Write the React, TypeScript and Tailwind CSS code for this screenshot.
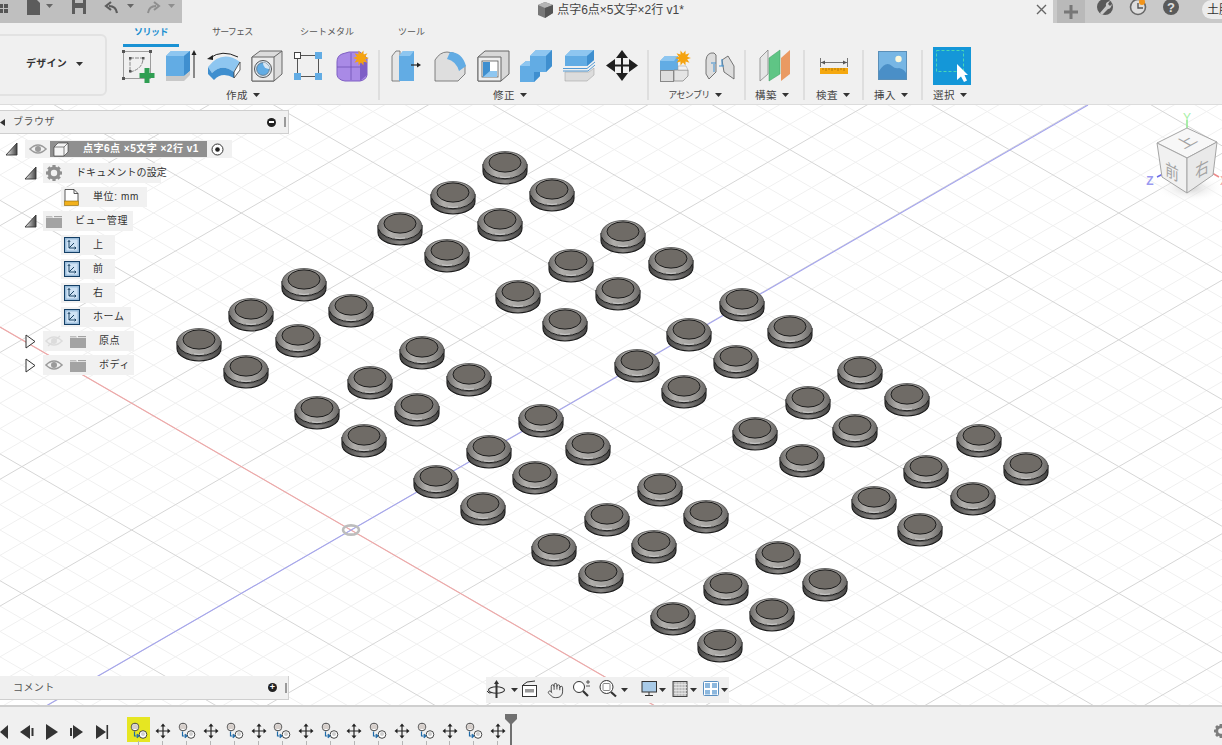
import React from "react";
import { Hand } from "lucide-react";

const S = ({ x, y, w, h, children, className = "" }: { x: number; y: number; w: number; h: number; children?: React.ReactNode; className?: string }) => (
  <svg width={w} height={h} viewBox={`${x} ${y} ${w} ${h}`} className={`block shrink-0 ${className}`}>
    {children}
  </svg>
);

const Caret = ({ className = "" }: { className?: string }) => (
  <svg width="7" height="4" viewBox="0 0 7 4" className={`inline-block shrink-0 ${className}`}>
    <polygon points="0,0 7,0 3.5,4" fill="#333" />
  </svg>
);

const dots: [number, number][] = [
  [505, 166], [453, 196], [552, 193], [400, 227], [500, 223], [447, 254],
  [623, 235], [571, 264], [671, 262], [518, 295], [618, 292], [565, 323],
  [742, 303], [689, 333], [790, 330], [637, 364], [736, 360], [684, 390],
  [860, 371], [808, 401], [907, 398], [755, 432], [855, 429], [802, 459],
  [979, 439], [926, 470], [1026, 467], [874, 501], [973, 497], [920, 528],
  [304, 283], [251, 313], [351, 309], [199, 343], [298, 339], [246, 370],
  [422, 351], [370, 381], [469, 378], [317, 411], [417, 408], [364, 439],
  [541, 419], [489, 450], [588, 447], [436, 480], [535, 476], [483, 507],
  [660, 488], [607, 518], [706, 515], [554, 548], [654, 545], [601, 575],
  [778, 556], [726, 587], [825, 583], [673, 617], [772, 613], [720, 644],
];

const Dot = ({ x, y }: { x: number; y: number }) => (
  <g transform={`translate(${x} ${y + 1.5})`}>
    <path d="M-22 -3 L-22 4 A22 12.5 0 0 0 22 4 L22 -3 Z" fill="url(#base)" stroke="#1b1b1b" strokeWidth="1.1" />
    <ellipse cx="0" cy="-2" rx="22" ry="14" fill="url(#dome)" stroke="#3a3a3a" strokeWidth="0.7" />
    <path d="M-21.5 0.5 A22 13.6 0 0 0 21.5 0.5" fill="none" stroke="#1f1f1f" strokeWidth="1" />
    <path d="M-5 9.4 Q0 10.4 5 9.4" fill="none" stroke="#cfcfcf" strokeWidth="0.9" />
    <ellipse cx="0" cy="-5" rx="16" ry="9.6" fill="#6f6b66" stroke="#1c1c1c" strokeWidth="1" />
  </g>
);

function gridLines() {
  const s = 0.578;
  const d = 25.36;
  const minor: string[] = [];
  const major: string[] = [];
  for (let k = -70; k <= 70; k++) {
    const a = `M0 ${530 + s * 351 + k * d} L1222 ${530 - s * 871 + k * d}`;
    const b = `M0 ${530 - s * 351 + k * d} L1222 ${530 + s * 871 + k * d}`;
    if (k % 5 === 0) major.push(a, b);
    else minor.push(a, b);
  }
  return { minor: minor.join(" "), major: major.join(" ") };
}
const grid = gridLines();

const Canvas = () => (
  <svg width="1222" height="601" viewBox="0 105 1222 601" className="absolute inset-0 block">
    <defs>
      <linearGradient id="dome" x1="0" x2="1" y1="0" y2="0">
        <stop offset="0" stopColor="#6e6c6a" />
        <stop offset="0.28" stopColor="#b0aeab" />
        <stop offset="0.72" stopColor="#9c9a97" />
        <stop offset="1" stopColor="#6a6866" />
      </linearGradient>
      <linearGradient id="base" x1="0" x2="1" y1="0" y2="0">
        <stop offset="0" stopColor="#444342" />
        <stop offset="0.5" stopColor="#8a8886" />
        <stop offset="1" stopColor="#444342" />
      </linearGradient>
      <radialGradient id="cubeShadow">
        <stop offset="0" stopColor="#cfcfcf" />
        <stop offset="1" stopColor="#ffffff" stopOpacity="0" />
      </radialGradient>
    </defs>
    <rect x="0" y="105" width="1222" height="601" fill="#ffffff" />
    <path d={grid.minor} stroke="#f0f0f0" strokeWidth="1" fill="none" />
    <path d={grid.major} stroke="#d6d6d6" strokeWidth="1" fill="none" />
    <line x1="0" y1="327" x2="655" y2="706" stroke="#f0a6a6" strokeWidth="1.1" />
    <line x1="46" y1="706" x2="1088" y2="105" stroke="#a3a3ee" strokeWidth="1.1" />
    <ellipse cx="351" cy="530" rx="8" ry="4.6" fill="none" stroke="#bdbdbd" strokeWidth="2.6" />
    {dots.map(([x, y]) => (
      <Dot key={`${x}-${y}`} x={x} y={y} />
    ))}
    <ellipse cx="1190" cy="188" rx="34" ry="14" fill="url(#cubeShadow)" />
    <line x1="1187" y1="128" x2="1187" y2="120" stroke="#8fe88f" strokeWidth="1.5" />
    <text x="1187" y="122" textAnchor="middle" fontSize="12" fill="#a6f0a6" fontFamily="Liberation Sans, sans-serif">Y</text>
    <line x1="1157" y1="177" x2="1163" y2="174" stroke="#6a6ae8" strokeWidth="1.5" />
    <text x="1150" y="185" textAnchor="middle" fontSize="12" fontWeight="700" fill="#9a9af0" fontFamily="Liberation Sans, sans-serif">Z</text>
    <line x1="1212" y1="173" x2="1219" y2="177" stroke="#ee8a8a" strokeWidth="1.5" />
    <text x="1220" y="185" fontSize="12" fill="#f0a0a0" fontFamily="Liberation Sans, sans-serif">X</text>
    <polygon points="1187,128 1217,142 1187,158 1157,143" fill="#f7f7f7" stroke="#a5a5a5" />
    <polygon points="1157,143 1187,158 1187,193 1162,177" fill="#f1f1f1" stroke="#a5a5a5" />
    <polygon points="1217,142 1187,158 1187,193 1213,175" fill="#e9e9e9" stroke="#a5a5a5" />
    <g fontFamily="Noto Sans CJK JP, sans-serif" fill="#a2a2a2" fontSize="17">
      <text transform="matrix(0.86 -0.48 0.86 0.48 1187 143)" textAnchor="middle" dominantBaseline="middle">上</text>
      <text transform="matrix(0.8 0.42 0 1 1172 178)" textAnchor="middle">前</text>
      <text transform="matrix(0.8 -0.42 0 1 1202 175)" textAnchor="middle">右</text>
    </g>
  </svg>
);

const Label = ({ text, className = "", kana = false }: { text: string; className?: string; kana?: boolean }) => (
  <div className={`flex h-[20px] items-center justify-center gap-[5px] leading-none text-[#444] ${kana ? "text-[9px] tracking-[-0.6px]" : "text-[10.5px] tracking-[0.5px]"} ${className}`}>
    <span>{text}</span>
    <Caret />
  </div>
);

const Sep = () => <div className="mt-[3px] h-[50px] w-[2px] shrink-0 bg-[#dedede]" />;

const blueL = "#8ec6f0";
const blueM = "#62ace4";
const blueD = "#3f8fcf";

const Star = ({ cx, cy, r = 8 }: { cx: number; cy: number; r?: number }) => {
  const pts: string[] = [];
  for (let i = 0; i < 20; i++) {
    const a = (Math.PI * 2 * i) / 20;
    const rr = i % 2 === 0 ? r : r * 0.55;
    pts.push(`${cx + Math.cos(a) * rr},${cy + Math.sin(a) * rr}`);
  }
  return <polygon points={pts.join(" ")} fill="#f5a30f" />;
};

const SolidIcons = () => (
  <div className="flex">
    <S x={120} y={47} w={40} h={38}>
      <rect x="123.5" y="51.5" width="27" height="27" fill="none" stroke="#888" strokeWidth="0.8" />
      {[[123.5, 51.5], [150.5, 51.5], [123.5, 78.5]].map(([a, b]) => (
        <rect key={a + "-" + b} x={a - 1.5} y={b - 1.5} width="3" height="3" fill="#555" />
      ))}
      <path d="M130 58 H143 Q143 69 130 72 Z" fill="none" stroke="#888" strokeWidth="1" strokeDasharray="4 1" />
      <rect x="129" y="57" width="2.5" height="2.5" fill="#555" />
      <rect x="142" y="57" width="2.5" height="2.5" fill="#555" />
      <rect x="129" y="70" width="2.5" height="2.5" fill="#555" />
      <path d="M144.5 68 h5 v5 h5 v5 h-5 v5 h-5 v-5 h-5 v-5 h5 z" fill="#2f9e52" />
    </S>
    <S x={160} y={47} w={42} h={38}>
      <polygon points="166,76 166,56 171,51 190,51 190,71 184,76" fill={blueM} />
      <polygon points="166,56 171,51 190,51 184,56" fill={blueL} />
      <polygon points="184,56 190,51 190,71 184,76" fill={blueD} />
      <polygon points="166,76 184,76 190,71 190,75 184,81 166,81" fill="#c8c8c8" />
      <line x1="194" y1="78" x2="194" y2="54" stroke="#222" strokeWidth="1" />
      <polygon points="194,50 191.5,55 196.5,55" fill="#222" />
    </S>
    <S x={202} y={47} w={44} h={38}>
      <path d="M210 58 Q222 49 238 57" fill="none" stroke="#222" strokeWidth="1" />
      <polygon points="207,59 213,55 213,60" fill="#222" />
      <path d="M208 67 Q222 49 240 62 L234 72 Q222 63 212 73 Z" fill={blueL} />
      <path d="M208 67 L212 73 Q222 63 234 72 L234 78 Q222 71 214 80 L208 74 Z" fill={blueD} />
      <polygon points="234,72 240,62 240,70 234,78" fill="#fff" stroke="#333" strokeWidth="0.8" />
    </S>
    <S x={246} y={47} w={43} h={38}>
      <polygon points="252,57 260,51 282,51 282,74 274,81 252,81" fill="#dcdcdc" stroke="#666" strokeWidth="1" />
      <polygon points="252,57 274,57 274,81 252,81" fill="#ececec" stroke="#666" strokeWidth="1" />
      <line x1="274" y1="57" x2="282" y2="51" stroke="#666" />
      <circle cx="263" cy="69" r="8.5" fill="#d8e6f2" stroke="#555" />
      <circle cx="263" cy="69" r="6.4" fill={blueM} stroke="#555" strokeWidth="0.6" />
      <path d="M263 62.6 A6.4 6.4 0 0 1 269.4 69 A6 6 0 0 1 263 62.6 Z" fill="#d8e6f2" />
    </S>
    <S x={289} y={47} w={41} h={38}>
      <line x1="300" y1="55.5" x2="315" y2="55.5" stroke="#555" />
      <line x1="297.5" y1="58" x2="297.5" y2="73" stroke="#555" />
      <line x1="300" y1="76.5" x2="315" y2="76.5" stroke="#555" />
      <line x1="318.5" y1="58" x2="318.5" y2="73" stroke="#555" />
      <rect x="294.5" y="52.5" width="6" height="6" fill="#fff" stroke="#444" />
      <rect x="315" y="52" width="7" height="7" fill={blueM} />
      <rect x="294" y="73" width="7" height="7" fill={blueM} />
      <rect x="315" y="73" width="7" height="7" fill={blueM} />
    </S>
    <S x={330} y={47} w={46} h={38}>
      <path d="M337 62 Q337 56 342 54 L349 52 L360 52 L367 58 L367 75 Q366 80 360 81 L345 81 Q338 80 337 75 Z" fill="#a98ae6" stroke="#7f5fc4" />
      <path d="M337 67 H362 M351 53 V80" stroke="#6f52b2" strokeWidth="0.8" />
      <path d="M360 62 H367 V75 L360 81 Z" fill="#7e5ec6" />
      <Star cx={361} cy={58} r={8} />
    </S>
  </div>
);

const ModifyIcons = () => (
  <div className="flex">
    <S x={381} y={47} w={45} h={38}>
      <polygon points="392,81 392,56 396,51 400,51 400,81" fill="#e6e6e6" stroke="#666" strokeWidth="0.8" />
      <polygon points="399,81 399,56 403,51 414,51 414,81" fill={blueM} />
      <polygon points="399,56 403,51 414,51 410,56" fill={blueL} />
      <line x1="411" y1="65" x2="418" y2="65" stroke="#222" strokeWidth="1.2" />
      <polygon points="421,65 417,62.5 417,67.5" fill="#222" />
    </S>
    <S x={426} y={47} w={44} h={38}>
      <path d="M435 81 V60 Q440 52 447 52 Q460 52 465 66 V74 L458 81 Z" fill="#dedede" stroke="#666" strokeWidth="0.8" />
      <path d="M450 52 Q462 52 466 66 L459 71 Q456 61 447 59 Z" fill={blueM} />
    </S>
    <S x={470} y={47} w={43} h={38}>
      <polygon points="478,57 485,51 509,51 509,74 501,81 478,81" fill="#d8d8d8" stroke="#666" />
      <polygon points="478,57 501,57 501,81 478,81" fill="#efefef" stroke="#666" />
      <rect x="482" y="61" width="16" height="16" fill="#fff" stroke="#555" strokeWidth="0.8" />
      <polygon points="483,62 490,62 490,71 497,71 497,77 483,77" fill={blueL} />
      <polygon points="483,62 490,62 490,71 483,77" fill={blueD} />
    </S>
    <S x={513} y={47} w={44} h={38}>
      <polygon points="520,66 526,61 540,61 540,76 534,82 520,82" fill={blueM} />
      <polygon points="530,56 536,50 552,50 552,66 546,72 530,72" fill={blueM} />
      <polygon points="530,56 536,50 552,50 546,56" fill={blueL} />
      <polygon points="546,56 552,50 552,66 546,72" fill={blueD} />
      <polygon points="520,66 526,61 530,61 530,66" fill={blueL} />
      <polygon points="534,72 540,72 540,76 534,82" fill={blueD} />
    </S>
    <S x={557} y={47} w={44} h={38}>
      <polygon points="565,56 571,50 594,50 594,60 587,66 565,66" fill={blueM} />
      <polygon points="565,56 571,50 594,50 587,56" fill={blueL} />
      <polygon points="587,56 594,50 594,60 587,66" fill={blueD} />
      <polygon points="565,72 589,72 594,68 594,75 587,81 565,81" fill="#dcdcdc" stroke="#999" strokeWidth="0.5" />
      <path d="M563 68.5 H587 L595 62 M563 71 H588 L595 65" stroke={blueD} strokeWidth="0.9" fill="none" />
    </S>
    <S x={601} y={47} w={46} h={38}>
      <path d="M622 50 L628 58 H623 V64.5 H629 V59 L638 65.5 L629 72 V66.5 H623 V73 H628 L622 81 L616 73 H621 V66.5 H615 V72 L606 65.5 L615 59 V64.5 H621 V58 H616 Z" fill="#1f1f1f" />
    </S>
  </div>
);

const AssemblyIcons = () => (
  <div className="flex">
    <S x={650} y={47} w={53} h={38}>
      <polygon points="660,61 665,56 678,56 678,70 660,70" fill={blueM} />
      <polygon points="660,61 665,56 678,56 674,61" fill={blueL} />
      <rect x="660.5" y="70.5" width="13" height="11" fill="#dedede" stroke="#888" />
      <polygon points="674,70 688,70 688,76 683,81 674,81" fill="#e4e4e4" stroke="#888" strokeWidth="0.8" />
      <polygon points="678,66 686,66 688,70 678,70" fill="#f2f2f2" stroke="#999" strokeWidth="0.5" />
      <Star cx={683} cy={58} r={8} />
    </S>
    <S x={703} y={47} w={41} h={38}>
      <path d="M706 60 Q707 52 714 53 L716 55 V72 L709 79 L706 74 Z" fill="#ddd" stroke="#666" strokeWidth="0.9" />
      <path d="M722 60 L728 56 L734 66 V79 L724 72 Z" fill="#ddd" stroke="#666" strokeWidth="0.9" />
      <line x1="714" y1="64" x2="714" y2="72" stroke={blueD} />
      <line x1="722" y1="59" x2="722" y2="66" stroke={blueD} />
      <path d="M711 63 h5 M719 66 h5" stroke={blueD} />
    </S>
  </div>
);

const Icons4 = () => (
  <S x={747} y={47} w={56} h={38}>
    <polygon points="760,58 768,50 768,74 760,81" fill="#e6e6e6" stroke="#777" strokeWidth="0.7" />
    <polygon points="769,58 780,50 780,74 769,81" fill="#5fc585" stroke="#3c9c60" strokeWidth="0.5" />
    <polygon points="781,58 790,50 790,74 781,81" fill="#ea9a62" />
  </S>
);
const Icons5 = () => (
  <S x={806} y={47} w={56} h={38}>
    <rect x="820" y="68" width="28" height="6" fill="#f5a80f" />
    <path d="M823 68 v2 M826 68 v3 M829 68 v2 M832 68 v3 M835 68 v2 M838 68 v3 M841 68 v2 M844 68 v3" stroke="#8a5a00" strokeWidth="0.6" />
    <path d="M820.5 58 V67 M847.5 58 V67" stroke="#666" strokeWidth="0.9" />
    <line x1="821" y1="62.5" x2="847" y2="62.5" stroke="#666" strokeWidth="0.9" />
    <polygon points="821,62.5 825,60.5 825,64.5" fill="#555" />
    <polygon points="847,62.5 843,60.5 843,64.5" fill="#555" />
  </S>
);
const Icons6 = () => (
  <S x={865} y={47} w={56} h={38}>
    <rect x="878.5" y="51.5" width="28" height="28" fill="#77b6e4" stroke="#5a8fb8" />
    <circle cx="898.5" cy="59" r="3.2" fill="#fbf8dc" />
    <path d="M879 79 V71 Q886 60 892 66 Q895 69 899 68 Q904 69 906 73 V79 Z" fill="#4a8fc7" />
  </S>
);
const Icons7 = () => (
  <S x={924} y={47} w={56} h={38}>
    <rect x="933" y="47" width="38" height="38" fill="#1497d8" />
    <rect x="936.5" y="50.5" width="27" height="21" fill="none" stroke="#4fe0b0" strokeWidth="0.9" strokeDasharray="3 2" />
    <path d="M957 64 L957 80 L961 76.5 L964 82 L967 80.5 L964.5 75 L968 75 Z" fill="#fff" />
  </S>
);

const Expanded = () => (
  <svg width="13" height="14" viewBox="0 0 13 14" className="block shrink-0">
    <defs>
      <linearGradient id="tri" x1="0" x2="1" y1="0" y2="0">
        <stop offset="0" stopColor="#eee" />
        <stop offset="1" stopColor="#444" />
      </linearGradient>
    </defs>
    <polygon points="1,13 12,13 12,1" fill="url(#tri)" stroke="#333" strokeWidth="0.9" />
  </svg>
);
const Collapsed = () => (
  <svg width="11" height="15" viewBox="0 0 11 15" className="block shrink-0">
    <polygon points="1,1 1,14 10,7.5" fill="#fafafa" stroke="#333" strokeWidth="1" />
  </svg>
);
const Eye = ({ off = false }: { off?: boolean }) => (
  <svg width="18" height="12" viewBox="0 0 18 12" className="block shrink-0">
    <path d="M1 6 Q9 -2 17 6 Q9 14 1 6 Z" fill="none" stroke={off ? "#dcdcdc" : "#9a9a9a"} strokeWidth="1.6" />
    <circle cx="9" cy="6" r="3" fill={off ? "#dcdcdc" : "#9a9a9a"} />
    {off && <line x1="3" y1="11" x2="15" y2="1" stroke="#dcdcdc" strokeWidth="1.4" />}
  </svg>
);
const Folder = () => (
  <svg width="16" height="13" viewBox="0 0 16 13" className="block shrink-0">
    <path d="M0 1 H6 L7 2.5 H0 Z" fill="#bdbdbd" />
    <rect x="0" y="3" width="16" height="10" fill="#a3a3a3" />
    <rect x="8" y="1" width="8" height="1.2" fill="#a3a3a3" />
  </svg>
);
const Gear = ({ size = 16, color = "#8f8f8f" }: { size?: number; color?: string }) => (
  <svg width={size} height={size} viewBox="0 0 16 16" className="block shrink-0">
    <circle cx="8" cy="8" r="5" fill="none" stroke={color} strokeWidth="3" />
    {[0, 45, 90, 135].map((a) => (
      <rect key={a} x="6.4" y="0" width="3.2" height="16" fill={color} transform={`rotate(${a} 8 8)`} />
    ))}
    <circle cx="8" cy="8" r="3.2" fill="#f2f2f2" />
  </svg>
);
const ViewIcon = () => (
  <svg width="16" height="16" viewBox="0 0 16 16" className="block shrink-0">
    <rect x="0.5" y="0.5" width="15" height="15" fill="#b9d6ef" stroke="#143f66" strokeWidth="1.2" />
    <rect x="2" y="2" width="12" height="12" fill="#cfe3f5" stroke="#7fa9cc" strokeWidth="0.6" />
    <path d="M5 3.5 V11 H12 M5 3.5 L3.8 5 M5 3.5 L6.2 5 M12 11 L10.5 9.8 M12 11 L10.5 12.2 M5 11 L10 6" stroke="#1c4464" strokeWidth="1" fill="none" />
  </svg>
);

const TreeText = ({ children, className = "" }: { children: React.ReactNode; className?: string }) => (
  <span className={`whitespace-nowrap text-[10px] leading-none text-[#333] ${className}`}>{children}</span>
);

const Browser = () => (
  <div className="absolute left-0 top-[5px] w-[289px]">
    <div className="flex h-[24px] items-center border border-l-0 border-[#cfcfcf] bg-[#f0f0f0]">
      <svg width="5" height="7" viewBox="0 0 5 7" className="block"><polygon points="5,0 5,7 0,3.5" fill="#333" /></svg>
      <span className="ml-[8px] text-[10px] leading-none tracking-[0.5px] text-[#555]">ブラウザ</span>
      <div className="ml-auto flex items-center">
        <span className="flex h-[9px] w-[9px] items-center justify-center rounded-full bg-[#222]"><span className="h-[1.5px] w-[5px] bg-white" /></span>
        <span className="ml-[8px] mr-[2px] h-[10px] w-[2px] border-x border-[#999]" />
      </div>
    </div>
    <div className="pt-[3px]">
      <div className="flex h-[24px] items-center pl-[5px]">
        <Expanded />
        <div className="ml-[7px] flex h-[18px] w-[207px] items-center bg-[#f1f1f1]">
          <div className="flex w-[25px] shrink-0 justify-center"><Eye /></div>
          <div className="flex h-[16px] w-[157px] shrink-0 items-center bg-[#8f8f8f]">
            <svg width="16" height="15" viewBox="0 0 16 15" className="ml-[3px] block shrink-0">
              <polygon points="1,5 5,1 15,1 15,10 11,14 1,14" fill="#f5f5f5" stroke="#333" strokeWidth="0.6" />
              <path d="M1 5 H11 V14 M11 5 L15 1" stroke="#333" strokeWidth="0.6" fill="none" />
            </svg>
            <span className="ml-[14px] whitespace-nowrap text-[10px] font-bold leading-none tracking-[0.5px] text-white">点字6点 ×5文字 ×2行 v1</span>
          </div>
          <svg width="13" height="13" viewBox="0 0 13 13" className="ml-[4px] block shrink-0">
            <circle cx="6.5" cy="6.5" r="5.5" fill="#fff" stroke="#333" />
            <circle cx="6.5" cy="6.5" r="2.3" fill="#222" />
          </svg>
        </div>
      </div>
      <div className="flex h-[24px] items-center pl-[24px]">
        <Expanded />
        <div className="ml-[6px] flex h-[20px] w-[118px] items-center bg-[#f1f1f1] pl-[3px]">
          <Gear />
          <TreeText className="ml-[14px] tracking-[0.1px]">ドキュメントの設定</TreeText>
        </div>
      </div>
      <div className="flex h-[24px] items-center pl-[61px]">
        <div className="flex h-[20px] w-[86px] items-center bg-[#f1f1f1] pl-[3px]">
          <svg width="15" height="17" viewBox="0 0 15 17" className="block shrink-0">
            <path d="M1 12 V0.5 H10 L14 4.5 V12" fill="#fff" stroke="#333" strokeWidth="0.8" />
            <path d="M10 0.5 V4.5 H14" fill="none" stroke="#333" strokeWidth="0.8" />
            <rect x="0.5" y="12" width="14" height="4.5" fill="#f2b11c" stroke="#8a6508" strokeWidth="0.6" />
          </svg>
          <TreeText className="ml-[14px] tracking-[0.6px]">単位: mm</TreeText>
        </div>
      </div>
      <div className="flex h-[24px] items-center pl-[24px]">
        <Expanded />
        <div className="ml-[6px] flex h-[20px] w-[90px] items-center bg-[#f1f1f1] pl-[3px]">
          <Folder />
          <TreeText className="ml-[13px] tracking-[0.6px]">ビュー管理</TreeText>
        </div>
      </div>
      {[
        ["上", "w-[54px]"],
        ["前", "w-[54px]"],
        ["右", "w-[54px]"],
        ["ホーム", "w-[70px]"],
      ].map(([t, w]) => (
        <div key={t} className="flex h-[24px] items-center pl-[61px]">
          <div className={`flex h-[20px] items-center bg-[#f1f1f1] pl-[3px] ${w}`}>
            <ViewIcon />
            <TreeText className="ml-[13px] tracking-[0.6px]">{t}</TreeText>
          </div>
        </div>
      ))}
      {[
        ["原点", true],
        ["ボディ", false],
      ].map(([t, off]) => (
        <div key={String(t)} className="flex h-[24px] items-center pl-[25px]">
          <Collapsed />
          <div className="ml-[7px] flex h-[20px] w-[91px] items-center bg-[#f1f1f1] pl-[2px]">
            <Eye off={Boolean(off)} />
            <div className="ml-[7px]"><Folder /></div>
            <TreeText className="ml-[13px] tracking-[0.6px]">{t as string}</TreeText>
          </div>
        </div>
      ))}
    </div>
  </div>
);

const Comment = () => (
  <div className="absolute bottom-[5px] left-0 flex h-[24px] w-[289px] items-center border-b border-r border-[#cfcfcf] bg-[#f0f0f0]">
    <span className="ml-[13px] text-[10px] leading-none tracking-[0.4px] text-[#555]">コメント</span>
    <div className="ml-auto flex items-center">
      <span className="flex h-[9px] w-[9px] items-center justify-center rounded-full bg-[#222] text-[9px] font-bold leading-none text-white">+</span>
      <span className="ml-[8px] mr-[1px] h-[10px] w-[2px] border-x border-[#999]" />
    </div>
  </div>
);

const NavBar = () => (
  <div className="absolute bottom-[2px] left-[486px] flex h-[26px] w-[243px] items-center bg-[#f0f0f0]">
    <S x={486} y={677} w={23} h={26}>
      <path d="M496.5 680 L499 684 H497.5 V698 H495.5 V684 H494 Z" fill="#333" />
      <ellipse cx="496.5" cy="690" rx="8" ry="3.2" fill="none" stroke="#333" strokeWidth="1.1" />
      <path d="M489 693 l-2 -2 M489 693 l3 -0.5" stroke="#333" />
    </S>
    <Caret className="mx-[2px]" />
    <S x={520} y={677} w={22} h={26}>
      <rect x="522.5" y="685.5" width="14" height="11" fill="#fff" stroke="#333" strokeWidth="1" />
      <rect x="525" y="689" width="9" height="3.5" fill="#999" />
      <path d="M523 685 L527 682 L535 681" stroke="#333" fill="none" />
    </S>
    <div className="flex w-[26px] shrink-0 justify-center">
      <Hand size={17} strokeWidth={1.2} color="#333" />
    </div>
    <S x={568} y={677} w={26} h={26}>
      <circle cx="579" cy="687" r="5.5" fill="#fff" stroke="#333" />
      <line x1="583" y1="691" x2="588" y2="696" stroke="#333" strokeWidth="2.2" />
      <path d="M586 682 h4 M588 680 v4 M586 686 h4" stroke="#333" strokeWidth="0.8" />
    </S>
    <S x={594} y={677} w={24} h={26}>
      <circle cx="606.5" cy="687" r="6.5" fill="#fff" stroke="#333" />
      <rect x="603" y="683.5" width="7" height="7" rx="1" fill="none" stroke="#888" />
      <line x1="611" y1="692" x2="616" y2="696.5" stroke="#333" strokeWidth="2.2" />
    </S>
    <Caret className="ml-[3px]" />
    <S x={628} y={677} w={32} h={26}>
      <rect x="642" y="681.5" width="14.5" height="10.5" fill="#a9cbe8" stroke="#333" />
      <path d="M649 692 v3 M645 695.5 h8" stroke="#333" />
    </S>
    <Caret className="-ml-[1px]" />
    <S x={667} y={677} w={23} h={26} className="ml-[1px]">
      <rect x="673" y="681.5" width="14" height="15" fill="#bbb" stroke="#444" />
      <path d="M676 682 v14 M679 682 v14 M682 682 v14 M685 682 v14 M674 684.5 h13 M674 687.5 h13 M674 690.5 h13 M674 693.5 h13" stroke="#eee" strokeWidth="0.7" />
    </S>
    <Caret />
    <S x={697} y={677} w={24} h={26}>
      <rect x="703.5" y="681.5" width="15" height="14" rx="1" fill="#fff" stroke="#5a8fc0" />
      <path d="M705 683 h5 v5 h-5 z M712 683 h5 v5 h-5 z M705 690 h5 v4.5 h-5 z M712 690 h5 v4.5 h-5 z" fill="#8db8de" />
    </S>
    <Caret />
  </div>
);

const Joint = () => (
  <svg width="20" height="20" viewBox="0 0 20 20" className="block shrink-0">
    <circle cx="6" cy="6" r="3.8" fill="#fff" stroke="#333" strokeWidth="0.9" />
    <path d="M2.8 5 A3.5 3.5 0 0 1 9.2 5 L9.2 8 L2.8 8 Z" fill="#d6cfcb" />
    <circle cx="14" cy="13.5" r="3.8" fill="#fff" stroke="#333" strokeWidth="0.9" />
    <circle cx="14" cy="13" r="2" fill="#cfcfcf" />
    <path d="M5.5 10.5 V15 H9.5 M7.8 13.1 L9.8 15 L7.8 16.9" stroke="#1e6aa8" strokeWidth="1.2" fill="none" />
  </svg>
);
const MoveSmall = () => (
  <svg width="16" height="16" viewBox="0 0 16 16" className="block shrink-0">
    <path d="M8 0.5 L10.5 3.5 H8.6 V7.4 H12.5 V5.5 L15.5 8 L12.5 10.5 V8.6 H8.6 V12.5 H10.5 L8 15.5 L5.5 12.5 H7.4 V8.6 H3.5 V10.5 L0.5 8 L3.5 5.5 V7.4 H7.4 V3.5 H5.5 Z" fill="#222" />
  </svg>
);

const Timeline = () => {
  const items = Array.from({ length: 16 }, (_, i) => i);
  return (
    <footer className="relative flex h-[40px] shrink-0 border-t-2 border-[#cfcfcf] bg-[#f0f0f0]">
      <S x={0} y={706} w={114} h={38}>
        <polygon points="8,724 8,738 0,731" fill="#333" />
        <polygon points="30,724 30,738 20,731" fill="#333" />
        <rect x="31.5" y="727" width="2" height="8" fill="#333" />
        <polygon points="46,723 46,739 58,731" fill="#333" />
        <rect x="70" y="727" width="2" height="8" fill="#333" />
        <polygon points="73,724 73,738 83,731" fill="#333" />
        <polygon points="96,724 96,738 106,731" fill="#333" />
        <rect x="106.5" y="724" width="1.6" height="14" fill="#333" />
      </S>
      <div className="ml-[13px] flex shrink-0">
        {items.map((i) => (
          <div key={i} className="relative flex h-[38px] w-[23.93px] flex-col items-center">
            {i === 0 && <div className="absolute left-0 top-[10px] h-[25px] w-[23px] bg-[#e6e622]" />}
            <div className="relative mt-[14px] flex h-[20px] items-center">{i % 2 === 0 ? <Joint /> : <MoveSmall />}</div>
            <div className="relative mt-auto h-[4px] w-[1px] bg-[#b5b5b5]" />
          </div>
        ))}
      </div>
      <svg width="14" height="38" viewBox="0 0 14 38" className="-ml-[6px] block shrink-0">
        <polygon points="1,7 13,7 13,12 7,18 1,12" fill="#707070" />
        <rect x="6" y="12" width="2" height="26" fill="#707070" />
      </svg>
      <div className="absolute -right-[6px] top-[17px]"><Gear size={14} color="#7d7d7d" /></div>
    </footer>
  );
};

export default function App() {
  return (
    <div className="flex h-[745px] w-[1222px] flex-col overflow-hidden bg-[#f0f0f0] font-['Liberation_Sans','Noto_Sans_CJK_JP',sans-serif]">
      <header className="flex h-[23px] shrink-0 items-stretch">
        <div className="flex w-[182px] shrink-0 bg-[#bfbfbf]">
          <S x={0} y={0} w={182} h={23}>
            <path d="M0 4 H3 V8 H0 Z M4 4 H8 V8 H4 Z M0 9 H3 V13 H0 Z M4 9 H8 V13 H4 Z" fill="#555" />
            <path d="M27 0 H37 L40 3 V15 H27 Z" fill="#5c5c5c" />
            <polygon points="46,4 53,4 49.5,8" fill="#666" />
            <path d="M72 0 H86 V14 H72 Z" fill="#5c5c5c" />
            <rect x="75" y="8" width="8" height="6" fill="#bfbfbf" />
            <rect x="75" y="0" width="8" height="3" fill="#bfbfbf" />
            <path d="M117 13 Q116 6 109 6 M111 2 L106 6 L111 10" fill="none" stroke="#5c5c5c" strokeWidth="2.2" />
            <polygon points="127,4 134,4 130.5,8" fill="#666" />
            <path d="M148 13 Q149 6 156 6 M154 2 L159 6 L154 10" fill="none" stroke="#8e8e8e" strokeWidth="2" />
            <polygon points="168,4 175,4 171.5,8" fill="#8e8e8e" />
          </S>
        </div>
        <div className="relative flex flex-1 items-center justify-center bg-[#f0f0f0] pr-[14px]">
          <div className="flex items-center pb-[3px]">
            <svg width="17" height="17" viewBox="0 0 17 17" className="block shrink-0">
              <polygon points="1,3 8,0 16,3 16,11 8,16 1,13" fill="#777" />
              <polygon points="1,3 8,0 16,3 8,6" fill="#b5b5b5" />
              <polygon points="8,6 16,3 16,11 8,16" fill="#555" />
            </svg>
            <span className="ml-[3px] whitespace-nowrap text-[12px] leading-none text-[#444]">点字6点×5文字×2行 v1*</span>
          </div>
          <svg width="11" height="11" viewBox="0 0 11 11" className="absolute right-[6px] top-[4px] block">
            <path d="M1 1 L10 10 M10 1 L1 10" stroke="#666" strokeWidth="1.4" />
          </svg>
        </div>
        <div className="flex w-[169px] shrink-0 items-start overflow-hidden bg-[#c9c9c9] pl-[4px]">
          <div className="flex h-[23px] w-[28px] shrink-0 items-center justify-center bg-[#b9b9b9]">
            <svg width="14" height="14" viewBox="0 0 14 14" className="block"><path d="M5.5 0 H8.5 V5.5 H14 V8.5 H8.5 V14 H5.5 V8.5 H0 V5.5 H5.5 Z" fill="#777" /></svg>
          </div>
          <S x={1085} y={0} w={110} h={23}>
            <circle cx="1105" cy="7" r="8" fill="#5a5a5a" />
            <path d="M1100 13 L1106 6 Q1105 2 1110 1 L1108 4 L1110 6 L1112 4 Q1111 9 1108 9 L1102 15 Z" fill="#c9c9c9" />
            <circle cx="1138" cy="7" r="7.5" fill="#ddd" stroke="#666" strokeWidth="1.6" />
            <path d="M1138 3 V8 H1143" fill="none" stroke="#555" strokeWidth="1.4" />
            <circle cx="1142" cy="2" r="3" fill="#f2941a" />
            <circle cx="1171" cy="7" r="8" fill="#5a5a5a" />
            <text x="1171" y="12" textAnchor="middle" fontSize="13" fontWeight="700" fill="#e0e0e0" fontFamily="Liberation Sans, sans-serif">?</text>
          </S>
          <div className="ml-[7px] flex h-[19px] w-[30px] shrink-0 items-center overflow-hidden rounded-l-[10px] bg-[#ececec] pl-[5px]">
            <span className="whitespace-nowrap text-[12px] leading-none text-[#333]">土勝</span>
          </div>
        </div>
      </header>

      <section className="flex h-[82px] shrink-0 border-b border-[#dcdcdc] bg-[#f0f0f0]">
        <div className="w-[120px] shrink-0 pt-[11px]">
          <div className="-ml-[6px] flex h-[62px] w-[113px] items-center justify-center gap-[9px] rounded-[6px] border-2 border-[#e2e2e2] pb-[3px] pl-[8px]">
            <span className="text-[10px] font-bold leading-none tracking-[0.2px] text-[#333]">デザイン</span>
            <Caret />
          </div>
        </div>
        <div className="flex flex-1 flex-col">
          <nav className="flex h-[24px] shrink-0 text-[9px] leading-none text-[#555]">
            <div className="ml-[3px] flex h-[24px] w-[56px] justify-center border-b-[3px] border-[#1a92d4] pt-[5px] font-bold tracking-[-0.5px] text-[#1a8fd0]">ソリッド</div>
            <div className="ml-[33px] w-[40px] whitespace-nowrap pt-[5px] tracking-[-0.8px]">サーフェス</div>
            <div className="ml-[48px] w-[53px] whitespace-nowrap pt-[5px]">シートメタル</div>
            <div className="ml-[45px] w-[26px] whitespace-nowrap pt-[5px]">ツール</div>
          </nav>
          <div className="flex">
            <div className="w-[258px] shrink-0">
              <SolidIcons />
              <Label text="作成" className="pr-[12px]" />
            </div>
            <Sep />
            <div className="ml-[1px] w-[266px] shrink-0">
              <ModifyIcons />
              <Label text="修正" className="pr-[8px]" />
            </div>
            <Sep />
            <div className="ml-[1px] w-[94px] shrink-0">
              <AssemblyIcons />
              <Label text="アセンブリ" kana className="pr-[4px]" />
            </div>
            <Sep />
            <div className="ml-[1px] w-[56px] shrink-0">
              <Icons4 />
              <Label text="構築" className="pr-[6px]" />
            </div>
            <Sep />
            <div className="ml-[1px] w-[56px] shrink-0">
              <Icons5 />
              <Label text="検査" className="pr-[2px]" />
            </div>
            <Sep />
            <div className="ml-[1px] w-[56px] shrink-0">
              <Icons6 />
              <Label text="挿入" className="pr-[4px]" />
            </div>
            <Sep />
            <div className="ml-[1px] w-[56px] shrink-0">
              <Icons7 />
              <Label text="選択" className="pr-[4px]" />
            </div>
          </div>
        </div>
      </section>

      <main className="relative flex-1 overflow-hidden bg-white">
        <Canvas />
        <Browser />
        <Comment />
        <NavBar />
      </main>

      <Timeline />
    </div>
  );
}
